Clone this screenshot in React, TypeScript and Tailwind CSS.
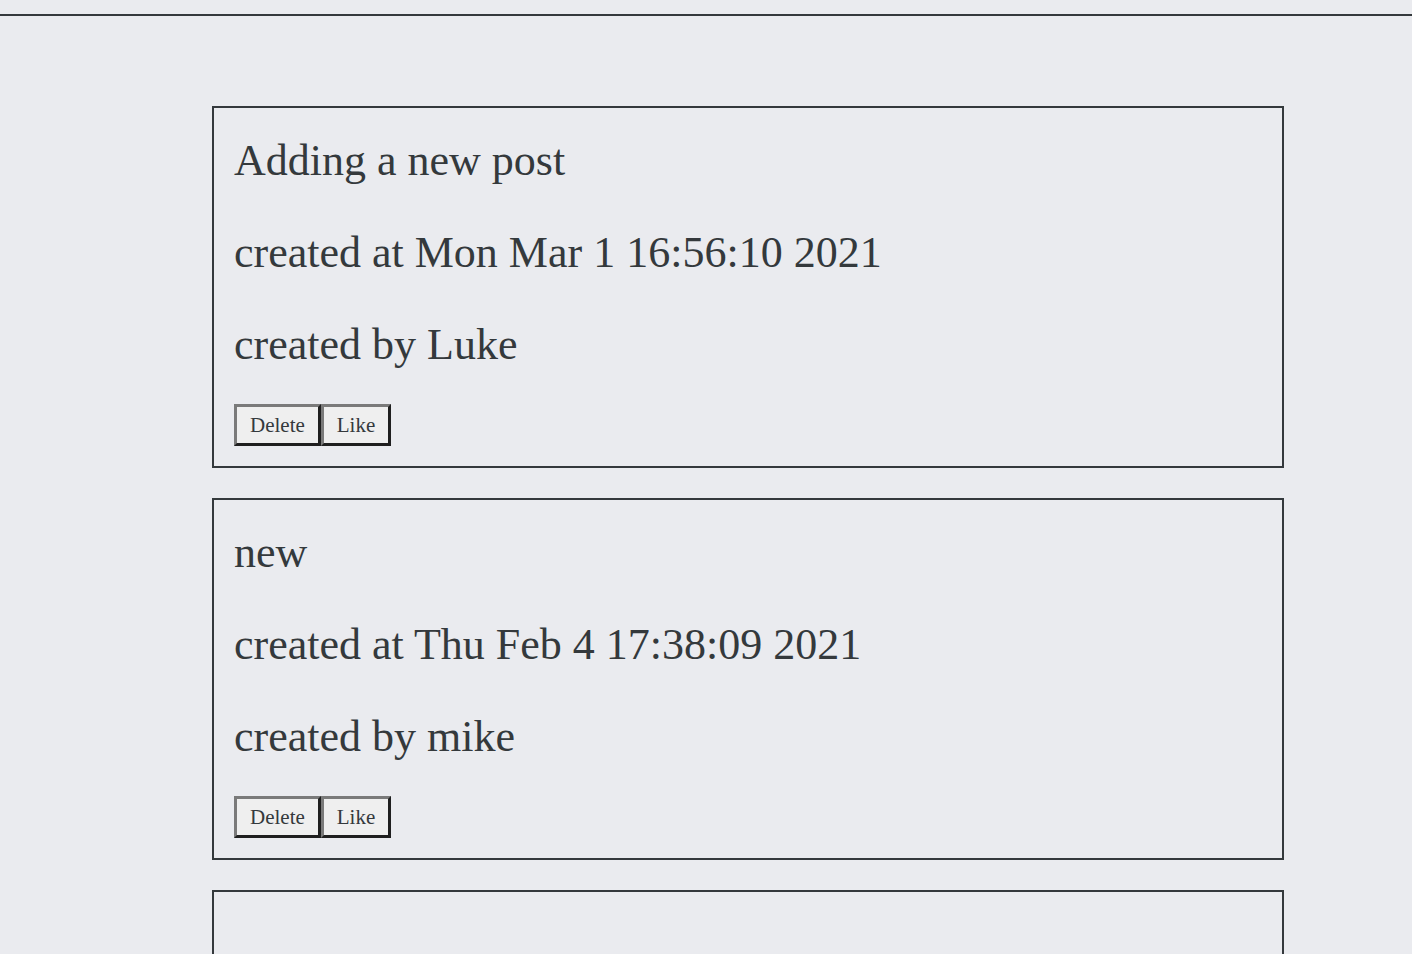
import React from "react";

const posts = [
  { title: "Adding a new post", at: "Mon Mar 1 16:56:10 2021", by: "Luke" },
  { title: "new", at: "Thu Feb 4 17:38:09 2021", by: "mike" },
];

function Btn({ children }: { children: React.ReactNode }) {
  return (
    <button className="h-[42px] px-[13px] bg-[#efefef] border-[3px] border-t-[#7a7a7a] border-l-[#7a7a7a] border-b-[#1f1f1f] border-r-[#1f1f1f] text-[21px] leading-none text-[#34393c]">
      {children}
    </button>
  );
}

export default function App() {
  return (
    <div
      className="bg-[#eaebef] text-[#34393c] overflow-hidden h-[954px]"
      style={{ fontFamily: '"Liberation Serif", "DejaVu Serif", serif' }}
    >
      <div className="pt-[14px]">
        <div className="h-[2px] bg-[#34393c]" />
      </div>
      <div className="ml-[212px] w-[1072px] pt-[90px] flex flex-col gap-[30px]">
        {posts.map((p, i) => (
          <div key={i} className="border-2 border-[#34393c] px-[20px] pt-[27px] pb-[20px]">
            <div className="flex flex-col gap-[40px] text-[44px] leading-[52px]">
              <div className="h-[52px] whitespace-nowrap">{p.title}</div>
              <div className="h-[52px] whitespace-nowrap">created at {p.at}</div>
              <div className="h-[52px] whitespace-nowrap">created by {p.by}</div>
            </div>
            <div className="mt-[33px] flex gap-0">
              <Btn>Delete</Btn>
              <Btn>Like</Btn>
            </div>
          </div>
        ))}
        <div className="border-2 border-[#34393c] h-[200px] shrink-0" />
      </div>
    </div>
  );
}
